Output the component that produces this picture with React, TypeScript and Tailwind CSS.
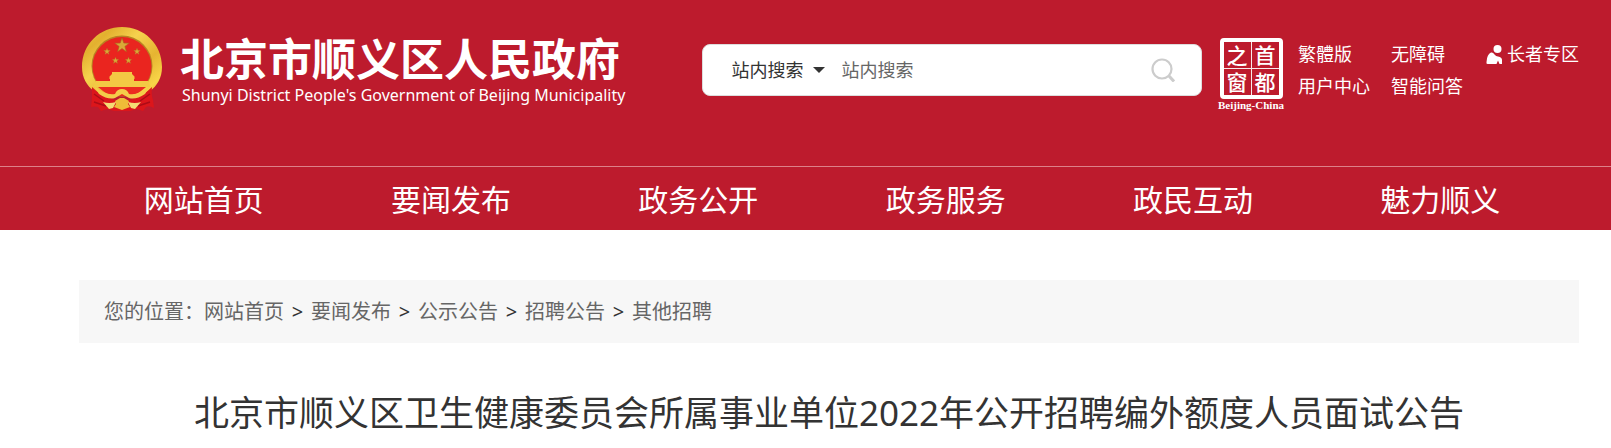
import { ReactNode } from "react";

const navItems = ["网站首页", "要闻发布", "政务公开", "政务服务", "政民互动", "魅力顺义"];
const crumbs = ["网站首页", "要闻发布", "公示公告", "招聘公告", "其他招聘"];

const STAR = "M0 -10 L2.4 -3.2 L9.5 -3.1 L3.8 1.2 L5.9 8.1 L0 4 L-5.9 8.1 L-3.8 1.2 L-9.5 -3.1 L-2.4 -3.2 Z";

function Emblem() {
  return (
    <svg viewBox="0 0 80 84" className="h-[84px] w-20 shrink-0" aria-hidden="true">
      <defs>
        <linearGradient id="gold" x1="0" y1="0" x2="1" y2="1">
          <stop offset="0" stopColor="#f0c440" />
          <stop offset="0.2" stopColor="#e3b02f" />
          <stop offset="0.4" stopColor="#f6d24e" />
          <stop offset="0.65" stopColor="#e6b431" />
          <stop offset="0.85" stopColor="#f8d548" />
          <stop offset="1" stopColor="#e2aa28" />
        </linearGradient>
      </defs>
      <path d="M40 0 C18 0 0 17 0 40 C0 51 5 59 12 64 Q20 69 28 70 L36 68 H44 L52 70 Q60 69 68 64 C75 59 80 51 80 40 C80 17 62 0 40 0Z" fill="url(#gold)" />
      <path d="M10 60 Q18 68 27 71 L36 74 H44 L53 71 Q62 68 70 60 Q69 68 71 73 L72 81 Q67 78 64 80 L61 84 L55 82 L48 84 H32 L25 82 L19 84 L16 80 Q12 79 9 80 L10 72Z" fill="#dc161b" />
      <path d="M12 67 L22 74 M12 75 L24 79 M68 67 L58 74 M68 75 L56 79" stroke="#ad0c16" strokeWidth="1.5" />
      <circle cx="40" cy="39" r="30.5" fill="#b98322" />
      <circle cx="40" cy="39.5" r="29.5" fill="#ea251f" />
      <g fill="#d9a837" stroke="#a8641f" strokeWidth="0.8">
        <path d={STAR} transform="translate(40 18.500) scale(.76)" />
        <path d={STAR} transform="translate(25 24.500) scale(.36)" />
        <path d={STAR} transform="translate(55 24.500) scale(.36)" />
        <path d={STAR} transform="translate(33.500 33.500) scale(.36)" />
        <path d={STAR} transform="translate(46.500 33.500) scale(.36)" />
      </g>
      <path d="M30 45 H50 V47 L52.500 49.500 V52 H27.500 V49.500 L30 47Z M14 54 H66 L69 60 H11Z M28 51 H52 V55 H28Z" fill="#f3c944" />
      <path d="M16 60 H64 L59 64 Q54 68 48 68 L44 64 H36 L32 68 Q26 68 21 64Z" fill="#ec2b20" />
      <path d="M12 59 Q24 69 33 67 Q35 62 40 62 Q45 62 47 67 Q56 69 68 59 L63 67 Q54 73 47 71 L40 67 L33 71 Q26 73 17 67Z" fill="#f4cc4a" />
      <path d="M33 74 L38 71 H42 L47 74 L46 77 L48 80 L40 83 L32 80 L34 77Z" fill="#efbd38" />
      <path d="M21 75 Q27 77 34 75 L31 81 L27 82Z M59 75 Q53 77 46 75 L49 81 L53 82Z" fill="#f4dc74" />
    </svg>
  );
}

function Seal() {
  return (
    <a href="#" className="flex w-[70px] shrink-0 flex-col items-center text-white">
      <span className="grid h-[61px] w-[63px] grid-cols-2 gap-px rounded border-4 border-white bg-white/90 text-[21px] leading-[26px] font-medium">
        {["之", "首", "窗", "都"].map((c) => (
          <span key={c} className="bg-[#bd1b2d] text-center">
            {c}
          </span>
        ))}
      </span>
      <span className="font-['Liberation_Serif','Noto_Sans_CJK_SC',serif] text-[11px] leading-[13px] font-bold whitespace-nowrap">
        Beijing-China
      </span>
    </a>
  );
}

function TopLink({ children }: { children: ReactNode }) {
  return (
    <a href="#" className="flex items-center gap-1 whitespace-nowrap">
      {children}
    </a>
  );
}

export default function App() {
  return (
    <div className="bg-white font-['Noto_Sans','Noto_Sans_CJK_SC',sans-serif] text-[#333]">
      <header className="bg-[#bd1b2d] text-white">
        <div className="flex items-start pt-[27px] pr-8 pb-[54px] pl-[82px]">
          <a href="#" className="flex shrink-0 gap-[18px]">
            <Emblem />
            <span className="flex flex-col pt-1.5">
              <span className="font-['Noto_Sans_CJK_SC',sans-serif] text-[44px] leading-[48px] font-bold whitespace-nowrap">
                北京市顺义区人民政府
              </span>
              <span className="pt-1 pl-0.5 text-base leading-5 whitespace-nowrap">
                Shunyi District People's Government of Beijing Municipality
              </span>
            </span>
          </a>
          <form
            className="mt-[17px] ml-[77px] flex h-[52px] min-w-0 flex-1 items-center rounded-lg border border-[#ddd] bg-white pr-[26px] pl-7 text-lg"
            onSubmit={(e) => e.preventDefault()}
          >
            <span className="relative flex shrink-0 items-center">
              <select aria-label="搜索范围" className="w-24 appearance-none bg-transparent text-[#333] outline-none">
                <option>站内搜索</option>
              </select>
              <svg viewBox="0 0 12 6" className="pointer-events-none absolute right-0.5 h-1.5 w-3" aria-hidden="true">
                <path d="M0 0H12L6 6Z" fill="#333" />
              </svg>
            </span>
            <input
              aria-label="站内搜索"
              placeholder="站内搜索"
              className="ml-3.5 min-w-0 flex-1 bg-transparent outline-none placeholder:text-[#666]"
            />
            <button type="submit" aria-label="搜索" className="shrink-0">
              <svg viewBox="0 0 24 24" className="size-6" fill="none" stroke="#ccc" strokeWidth="2.2" aria-hidden="true">
                <circle cx="11" cy="11" r="9.500" />
                <path d="M18 18L23 23.500" strokeWidth="3" />
              </svg>
            </button>
          </form>
          <div className="mt-[11px] ml-[14px]">
            <Seal />
          </div>
          <div className="mt-[11px] ml-3 grid shrink-0 grid-cols-[93px_95px_auto] text-lg leading-8">
            <TopLink>繁體版</TopLink>
            <TopLink>无障碍</TopLink>
            <TopLink>
              <svg viewBox="0 0 17 19" className="h-[19px] w-[17px]" fill="#fff" aria-hidden="true">
                <circle cx="11.500" cy="4" r="4" />
                <path d="M5 7.500 Q7 7 8.500 9.500 Q10 11.500 12 11.500 Q16 12 16 15 V19 H13.500 L12 15.500 L10.500 19 H1.500 Q0 19 .5 17 Q1 9 5 7.500Z" />
              </svg>
              长者专区
            </TopLink>
            <TopLink>用户中心</TopLink>
            <TopLink>智能问答</TopLink>
          </div>
        </div>
        <nav className="grid grid-cols-6 border-t border-[#dd8088] pt-[3px] pr-[47px] pl-20 text-center text-[30px] leading-[60px]">
          {navItems.map((item) => (
            <a key={item} href="#" className="whitespace-nowrap">
              {item}
            </a>
          ))}
        </nav>
      </header>
      <main className="pt-[50px] pr-8 pl-[79px]">
        <nav aria-label="您的位置" className="flex bg-[#f7f7f7] px-[25px] text-xl leading-[63px] whitespace-nowrap text-[#666]">
          <span>您的位置：</span>
          {crumbs.map((c, i) => (
            <span key={c} className="flex">
              {i > 0 && <span className="w-[27px] text-center text-[#333]">&gt;</span>}
              <a href="#">{c}</a>
            </span>
          ))}
        </nav>
        <h1 className="pt-11 pb-2 text-center text-[35px] leading-[52px]">
          北京市顺义区卫生健康委员会所属事业单位2022年公开招聘编外额度人员面试公告
        </h1>
      </main>
    </div>
  );
}
